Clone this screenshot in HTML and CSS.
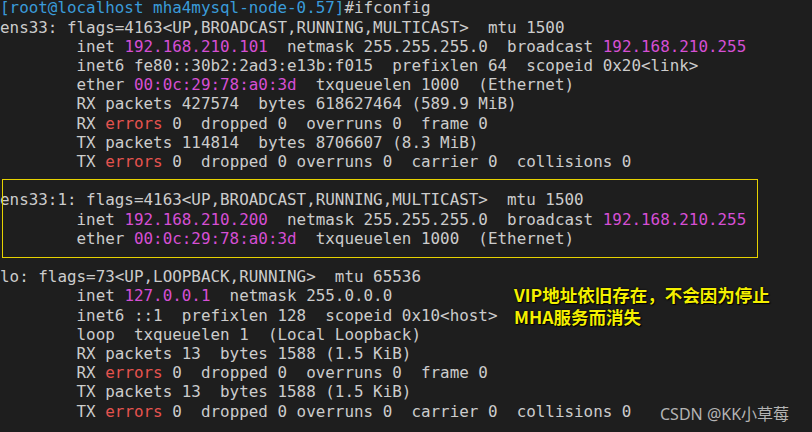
FILE: index.html
```html
<!DOCTYPE html>
<html lang="zh-cn">
<head>
    <meta charset="UTF-8">
    <title>ifconfig</title>
    <link rel="stylesheet" href="styles.css">
</head>
<body>
    <div class="terminal">
<pre class="output"><span class="prompt">[root@localhost mha4mysql-node-0.57]</span>#ifconfig
ens33: flags=4163&lt;UP,BROADCAST,RUNNING,MULTICAST&gt;  mtu 1500
        inet <span class="ip">192.168.210.101</span>  netmask 255.255.255.0  broadcast <span class="ip">192.168.210.255</span>
        inet6 fe80::30b2:2ad3:e13b:f015  prefixlen 64  scopeid 0x20&lt;link&gt;
        ether <span class="ip">00:0c:29:78:a0:3d</span>  txqueuelen 1000  (Ethernet)
        RX packets 427574  bytes 618627464 (589.9 MiB)
        RX <span class="err">errors</span> 0  dropped 0  overruns 0  frame 0
        TX packets 114814  bytes 8706607 (8.3 MiB)
        TX <span class="err">errors</span> 0  dropped 0 overruns 0  carrier 0  collisions 0

ens33:1: flags=4163&lt;UP,BROADCAST,RUNNING,MULTICAST&gt;  mtu 1500
        inet <span class="ip">192.168.210.200</span>  netmask 255.255.255.0  broadcast <span class="ip">192.168.210.255</span>
        ether <span class="ip">00:0c:29:78:a0:3d</span>  txqueuelen 1000  (Ethernet)

lo: flags=73&lt;UP,LOOPBACK,RUNNING&gt;  mtu 65536
        inet <span class="ip">127.0.0.1</span>  netmask 255.0.0.0
        inet6 ::1  prefixlen 128  scopeid 0x10&lt;host&gt;
        loop  txqueuelen 1  (Local Loopback)
        RX packets 13  bytes 1588 (1.5 KiB)
        RX <span class="err">errors</span> 0  dropped 0  overruns 0  frame 0
        TX packets 13  bytes 1588 (1.5 KiB)
        TX <span class="err">errors</span> 0  dropped 0 overruns 0  carrier 0  collisions 0</pre>
        <div class="highlight"></div>
        <div class="note">VIP地址依旧存在，不会因为停止<br>MHA服务而消失</div>
        <div class="watermark">CSDN @KK小草莓</div>
    </div>
</body>
</html>
```

FILE: styles.css
```css
html, body {
    margin: 0;
    padding: 0;
    background-color: #1e1e1e;
}
.terminal {
    position: relative;
    width: 812px;
    height: 432px;
    overflow: hidden;
    background-color: #1e1e1e;
}
.output {
    margin: 0;
    padding: 0;
    margin-top: -1.6px;
    font-family: "DejaVu Sans Mono", "Liberation Mono", monospace;
    font-size: 15.9px;
    line-height: 19.2px;
    color: #cccccc;
}
.prompt {
    color: #3a9bd9;
}
.ip {
    color: #d64fd4;
}
.err {
    color: #e5534f;
}
.highlight {
    position: absolute;
    left: 2px;
    top: 179px;
    width: 754px;
    height: 77px;
    border: 1.5px solid #e6d200;
}
.note {
    position: absolute;
    left: 514px;
    top: 284px;
    font-family: "Noto Sans CJK SC", sans-serif;
    font-weight: bold;
    font-size: 17.5px;
    line-height: 22px;
    color: #f4f000;
    text-shadow: 0 0 2px #000, 1px 1px 1px #000;
}
.watermark {
    position: absolute;
    left: 660px;
    top: 401px;
    font-family: "Noto Sans", "Noto Sans CJK SC", sans-serif;
    font-size: 16px;
    color: #b4b4b4;
}
```
